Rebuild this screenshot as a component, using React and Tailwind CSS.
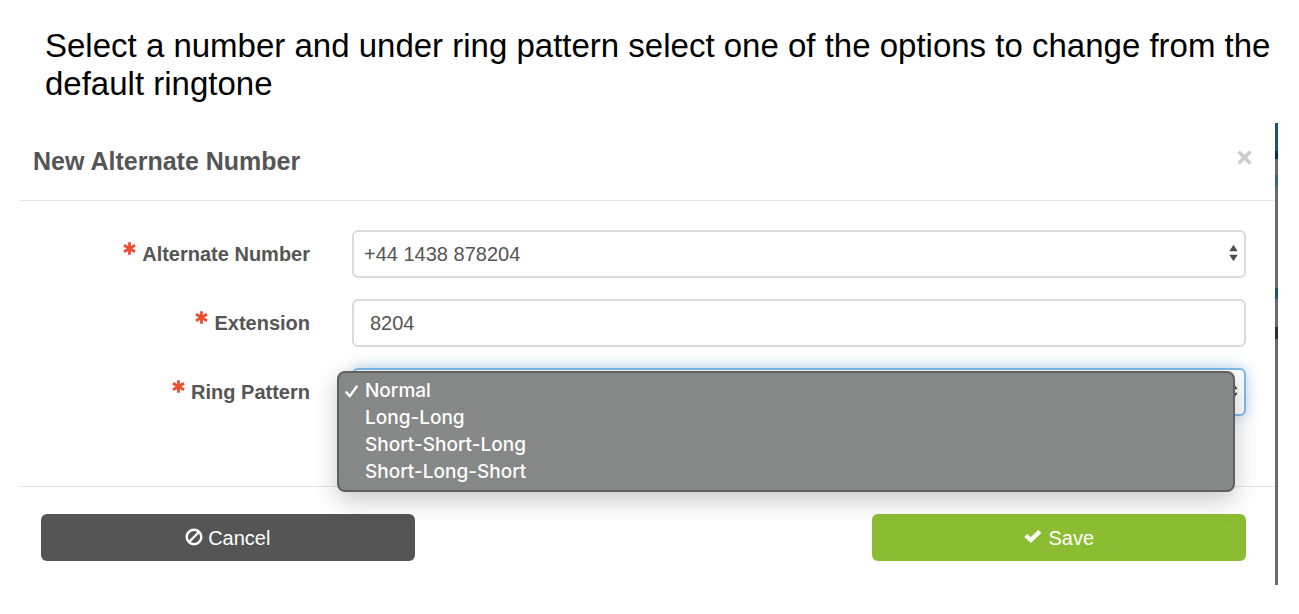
import { useState } from 'react'

const RING_PATTERNS = ['Normal', 'Long-Long', 'Short-Short-Long', 'Short-Long-Short']

function BanIcon() {
  return (
    <svg viewBox="0 0 18 18" className="mb-[2px] size-[18px]" fill="none" stroke="currentColor" aria-hidden="true">
      <circle cx="9" cy="9" r="7.3" strokeWidth="2.4" />
      <path d="M4 14 14 4" strokeWidth="2.4" />
    </svg>
  )
}

function CheckIcon() {
  return (
    <svg viewBox="0 0 18 15" className="mb-[2px] h-[15px] w-[18px]" fill="currentColor" aria-hidden="true">
      <path d="M0.4 7.9 3.2 5.1 6.7 8.3 14.3 0.9 17.3 3.9 6.9 14.1z" />
    </svg>
  )
}

function CloseIcon() {
  return (
    <svg viewBox="0 0 15 15" className="size-[15px]" fill="none" stroke="currentColor" aria-hidden="true">
      <path d="M1.6 1.6 13.4 13.4M13.4 1.6 1.6 13.4" strokeWidth="3.6" />
    </svg>
  )
}

function RequiredIcon() {
  return (
    <svg
      viewBox="0 0 13 13"
      className="mb-3 size-[13px] text-[#ee4b2f]"
      fill="none"
      stroke="currentColor"
      aria-hidden="true"
    >
      <path d="M6.5 0.2V12.8M1 3.3 12 9.7M12 3.3 1 9.7" strokeWidth="2.8" />
    </svg>
  )
}

function SelectArrows() {
  return (
    <svg
      viewBox="0 0 9 18"
      className="pointer-events-none absolute right-2 top-[14px] h-[18px] w-[9px] text-[#4d4d4d]"
      fill="currentColor"
      aria-hidden="true"
    >
      <path d="M4.5 0.7 8.7 7.3H0.3zM4.5 17.3 8.7 10.7H0.3z" />
    </svg>
  )
}

function FormRow({ id, label, children }) {
  return (
    <div className="flex items-center gap-[42px]">
      <label
        htmlFor={id}
        className="flex w-[291px] shrink-0 items-center justify-end gap-[6px] text-xl font-bold text-[#555]"
      >
        <RequiredIcon />
        {label}
      </label>
      <div className="relative flex-1">{children}</div>
    </div>
  )
}

// Sliver of the page that shows behind the dialog
function PageEdge() {
  return (
    <div className="flex w-[3px] shrink-0 flex-col bg-[#6a6a6a]" aria-hidden="true">
      <div className="h-7 bg-[#1b5574]" />
      <div className="h-2 bg-[#0b2c45]" />
      <div className="mt-4 h-3 bg-[#3f6173]" />
      <div className="mt-[101px] h-[11px] bg-[#1b5574]" />
      <div className="mt-7 h-3 bg-[#2e2e2e]" />
    </div>
  )
}

export default function App() {
  const [number, setNumber] = useState('+44 1438 878204')
  const [extension, setExtension] = useState('8204')
  const [pattern, setPattern] = useState('Normal')
  const [open, setOpen] = useState(true)

  function choosePattern(value) {
    setPattern(value)
    setOpen(false)
  }

  return (
    <div className="bg-white pb-7 font-['Liberation_Sans',Arial,sans-serif]">
      <p className="pl-[45px] pt-[27px] text-[33px] leading-[38px] text-black">
        Select a number and under ring pattern select one of the options to change from the default ringtone
      </p>

      <div className="ml-[19px] mr-[21px] mt-5 flex">
        <form className="flex-1" onSubmit={(e) => e.preventDefault()}>
          {/* Header */}
          <div className="flex h-[78px] items-center justify-between border-b border-[#e5e5e5] pl-[14px] pr-[23px]">
            <h1 className="text-[25px] font-bold text-[#555]">New Alternate Number</h1>
            <button type="button" aria-label="Close" className="mb-2 text-[#ccc]">
              <CloseIcon />
            </button>
          </div>

          {/* Fields */}
          <div className="flex flex-col gap-[21px] pb-[70px] pr-[29px] pt-[29px] text-xl text-[#555]">
            <FormRow id="number" label="Alternate Number">
              <select
                id="number"
                value={number}
                onChange={(e) => setNumber(e.target.value)}
                className="block h-12 w-full appearance-none rounded-md border-2 border-[#dadada] bg-white px-[10px]"
              >
                <option>+44 1438 878204</option>
              </select>
              <SelectArrows />
            </FormRow>

            <FormRow id="extension" label="Extension">
              <input
                id="extension"
                type="text"
                value={extension}
                onChange={(e) => setExtension(e.target.value)}
                className="block h-12 w-full rounded-md border-2 border-[#dadada] px-4"
              />
            </FormRow>

            <FormRow id="pattern" label="Ring Pattern">
              <select
                id="pattern"
                value={pattern}
                onChange={(e) => setPattern(e.target.value)}
                className="block h-12 w-full appearance-none rounded-md border-2 border-[#7ebaf0] bg-white px-[10px] shadow-[0_0_14px_rgba(102,175,233,0.5)]"
              >
                {RING_PATTERNS.map((name) => (
                  <option key={name}>{name}</option>
                ))}
              </select>
              <SelectArrows />

              {open && (
                <div
                  role="listbox"
                  aria-label="Ring Pattern"
                  className="absolute -left-[15px] right-[11px] top-[3px] rounded-lg border-2 border-[#606060] bg-[#868787] pb-1 pt-[5px] font-['Inter',sans-serif] text-[19px] font-medium text-white shadow-[0_8px_24px_rgba(0,0,0,0.22)]"
                >
                  {RING_PATTERNS.map((name) => (
                    <button
                      key={name}
                      type="button"
                      role="option"
                      aria-selected={name === pattern}
                      onClick={() => choosePattern(name)}
                      className="flex h-[27px] w-full items-center pl-[6px] text-left"
                    >
                      <span className="w-5">
                        {name === pattern && (
                          <svg viewBox="0 0 13 13" className="size-[13px]" fill="none" stroke="currentColor" aria-hidden="true">
                            <path d="M1.3 7.3 4.8 11.2 11.6 1.6" strokeWidth="2.4" strokeLinecap="round" strokeLinejoin="round" />
                          </svg>
                        )}
                      </span>
                      {name}
                    </button>
                  ))}
                </div>
              )}
            </FormRow>
          </div>

          {/* Footer */}
          <div className="flex justify-between border-t border-[#e5e5e5] pb-6 pl-[22px] pr-[29px] pt-[27px] text-xl text-white">
            <button type="button" className="flex h-[47px] w-[31%] items-center justify-center gap-[5px] rounded-md bg-[#555]">
              <BanIcon />
              Cancel
            </button>
            <button type="submit" className="flex h-[47px] w-[31%] items-center justify-center gap-[6px] rounded-md bg-[#8bbd33]">
              <CheckIcon />
              Save
            </button>
          </div>
        </form>
        <PageEdge />
      </div>
    </div>
  )
}
